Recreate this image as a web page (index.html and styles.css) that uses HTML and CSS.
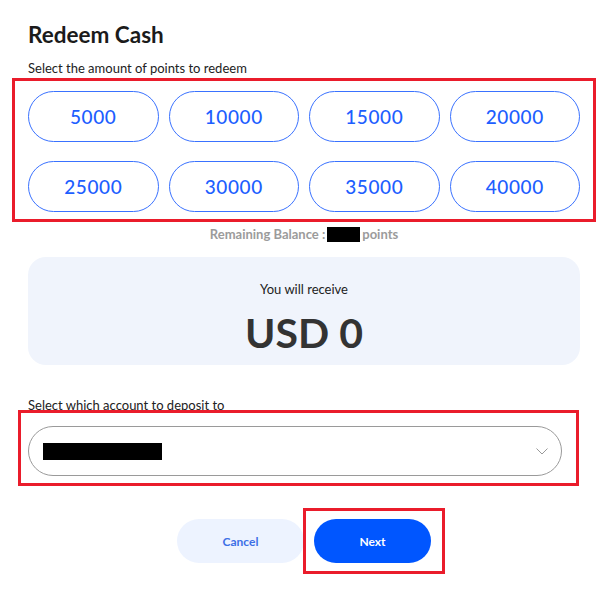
FILE: index.html
```html
<!DOCTYPE html>
<html lang="en">
<head>
  <meta charset="UTF-8" />
  <meta name="viewport" content="width=device-width, initial-scale=1.0" />
  <title>Redeem Cash</title>
  <link rel="stylesheet" href="styles.css">
</head>
<body>
  <div class="page">
    <h1>Redeem Cash</h1>
    <p class="label">Select the amount of points to redeem</p>

    <div class="amounts marked">
      <button class="amount">5000</button>
      <button class="amount">10000</button>
      <button class="amount">15000</button>
      <button class="amount">20000</button>
      <button class="amount">25000</button>
      <button class="amount">30000</button>
      <button class="amount">35000</button>
      <button class="amount">40000</button>
    </div>

    <p class="balance">Remaining Balance :<span class="hidden-value wide"></span>points</p>

    <div class="receive">
      <p>You will receive</p>
      <div class="total">USD 0</div>
    </div>

    <p class="label account-label">Select which account to deposit to</p>
    <div class="account-wrap marked">
      <div class="account">
        <span class="hidden-value account-name"></span>
        <svg class="chevron" width="12" height="7" viewBox="0 0 12 7">
          <polyline points="0.5,0.5 6,6 11.5,0.5" fill="none" stroke="#999" stroke-width="1" />
        </svg>
      </div>
    </div>

    <div class="actions">
      <button class="btn cancel">Cancel</button>
      <div class="next-wrap marked">
        <button class="btn next">Next</button>
      </div>
    </div>
  </div>
</body>
</html>
```

FILE: styles.css
```css
body {
  margin: 0;
  background: #fff;
  font-family: Lato, "Noto Sans", sans-serif;
  color: #222;
}
.page {
  padding: 0 30px 40px 28px;
}
h1 {
  font-size: 22.5px;
  font-weight: 700;
  line-height: 28px;
  margin: 21px 0 0;
  color: #1b1b1b;
}
.label {
  font-size: 13px;
  line-height: 16px;
  margin: 11px 0 0;
  color: #222;
}

/* red review outlines */
.marked {
  position: relative;
}
.marked::after {
  content: "";
  position: absolute;
  border: 3px solid #ea1c2b;
  pointer-events: none;
}

.amounts {
  display: grid;
  grid-template-columns: repeat(4, 1fr);
  column-gap: 10px;
  row-gap: 19px;
  margin-top: 15px;
}
.amounts::after {
  top: -13px;
  bottom: -10px;
  left: -16px;
  right: -16px;
}
.amount {
  height: 51px;
  border: 1px solid #3a72ff;
  border-radius: 26px;
  background: #fff;
  color: #1d5eff;
  font-family: Lato, sans-serif;
  font-size: 19px;
  font-weight: 500;
  letter-spacing: 0.6px;
  padding: 0;
}

.balance {
  margin: 15px 0 0;
  text-align: center;
  font-size: 13px;
  font-weight: 700;
  color: #9b9b9b;
  line-height: 15px;
  display: flex;
  justify-content: center;
  align-items: center;
}
.hidden-value {
  display: inline-block;
  background: #000;
}
.wide {
  width: 33px;
  height: 15px;
  margin: 0 2px 0 2px;
}

.receive {
  margin-top: 15px;
  background: #f0f4fc;
  border-radius: 18px;
  height: 108px;
  text-align: center;
  box-sizing: border-box;
  padding-top: 24px;
}
.receive p {
  margin: 0;
  font-size: 13px;
  line-height: 16px;
  color: #222;
}
.total {
  font-size: 41px;
  font-weight: 700;
  line-height: 48px;
  margin-top: 12px;
  color: #333;
}

.account-label {
  margin-top: 32px;
}
.account-wrap {
  margin-top: 13px;
  margin-right: 18px;
}
.account-wrap::after {
  top: -16px;
  bottom: -10px;
  left: -10px;
  right: -17px;
}
.account {
  height: 50px;
  box-sizing: border-box;
  border: 1px solid #9a9a9a;
  border-radius: 25px;
  display: flex;
  align-items: center;
  justify-content: space-between;
  padding: 0 13px 0 14px;
}
.account-name {
  width: 119px;
  height: 17px;
}

.actions {
  display: flex;
  justify-content: center;
  gap: 10px;
  margin-top: 43px;
}
.btn {
  display: block;
  height: 44px;
  border: none;
  border-radius: 22px;
  font-family: Lato, sans-serif;
  font-size: 12px;
  font-weight: 700;
  padding: 0;
}
.cancel {
  width: 127px;
  background: #edf3ff;
  color: #3d6fe6;
}
.next {
  width: 117px;
  background: #0056ff;
  color: #fff;
}
.next-wrap::after {
  top: -11px;
  bottom: -11px;
  left: -11px;
  right: -14px;
}
```
